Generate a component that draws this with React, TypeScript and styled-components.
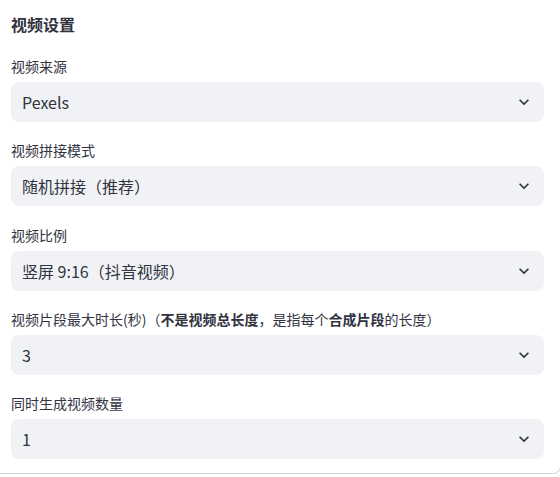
import React from "react";
import styled, { createGlobalStyle } from "styled-components";

const GlobalStyle = createGlobalStyle`
  html, body {
    margin: 0;
    padding: 0;
    background: #ffffff;
    overflow: hidden;
  }
  body {
    font-family: "Noto Sans CJK SC", "Noto Sans", sans-serif;
    color: rgb(49, 51, 63);
  }
`;

const Card = styled.section`
  box-sizing: border-box;
  width: 561px;
  padding: 12px 16px 14px 11px;
  background: #ffffff;
  border-right: 1px solid rgba(49, 51, 63, 0.2);
  border-bottom: 1px solid rgba(49, 51, 63, 0.2);
  border-bottom-right-radius: 8px;
  display: flex;
  flex-direction: column;
`;

const Heading = styled.div`
  font-size: 16px;
  font-weight: 700;
  line-height: 24px;
  height: 24px;
  margin-bottom: 18px;
`;

const Fields = styled.div`
  display: flex;
  flex-direction: column;
  gap: 16.25px;
`;

const Field = styled.div`
  display: flex;
  flex-direction: column;
`;

const Label = styled.label`
  font-size: 14px;
  line-height: 24px;
  height: 24px;
  margin-bottom: 4px;
  white-space: nowrap;
  b {
    font-weight: 700;
  }
`;

const SelectBox = styled.div`
  box-sizing: border-box;
  height: 40px;
  border-radius: 8px;
  background: rgb(240, 242, 246);
  display: flex;
  align-items: center;
  justify-content: space-between;
  padding: 0 10px 0 11px;
  font-size: 16px;
  color: rgb(49, 51, 63);
`;

const Value = styled.span`
  line-height: 24px;
  white-space: nowrap;
`;

const Chevron = () => (
  <svg width="20" height="20" viewBox="0 0 24 24" aria-hidden="true">
    <path
      d="M16.59 8.59L12 13.17 7.41 8.59 6 10l6 6 6-6z"
      fill="rgb(49, 51, 63)"
    />
  </svg>
);

const Select: React.FC<{ value: string }> = ({ value }) => (
  <SelectBox>
    <Value>{value}</Value>
    <Chevron />
  </SelectBox>
);

export default function App() {
  return (
    <>
      <GlobalStyle />
      <Card>
        <Heading>视频设置</Heading>
        <Fields>
          <Field>
            <Label>视频来源</Label>
            <Select value="Pexels" />
          </Field>
          <Field>
            <Label>视频拼接模式</Label>
            <Select value="随机拼接（推荐）" />
          </Field>
          <Field>
            <Label>视频比例</Label>
            <Select value="竖屏 9:16（抖音视频）" />
          </Field>
          <Field>
            <Label>
              视频片段最大时长(秒)（<b>不是视频总长度</b>，是指每个<b>合成片段</b>的长度）
            </Label>
            <Select value="3" />
          </Field>
          <Field>
            <Label>同时生成视频数量</Label>
            <Select value="1" />
          </Field>
        </Fields>
      </Card>
    </>
  );
}
